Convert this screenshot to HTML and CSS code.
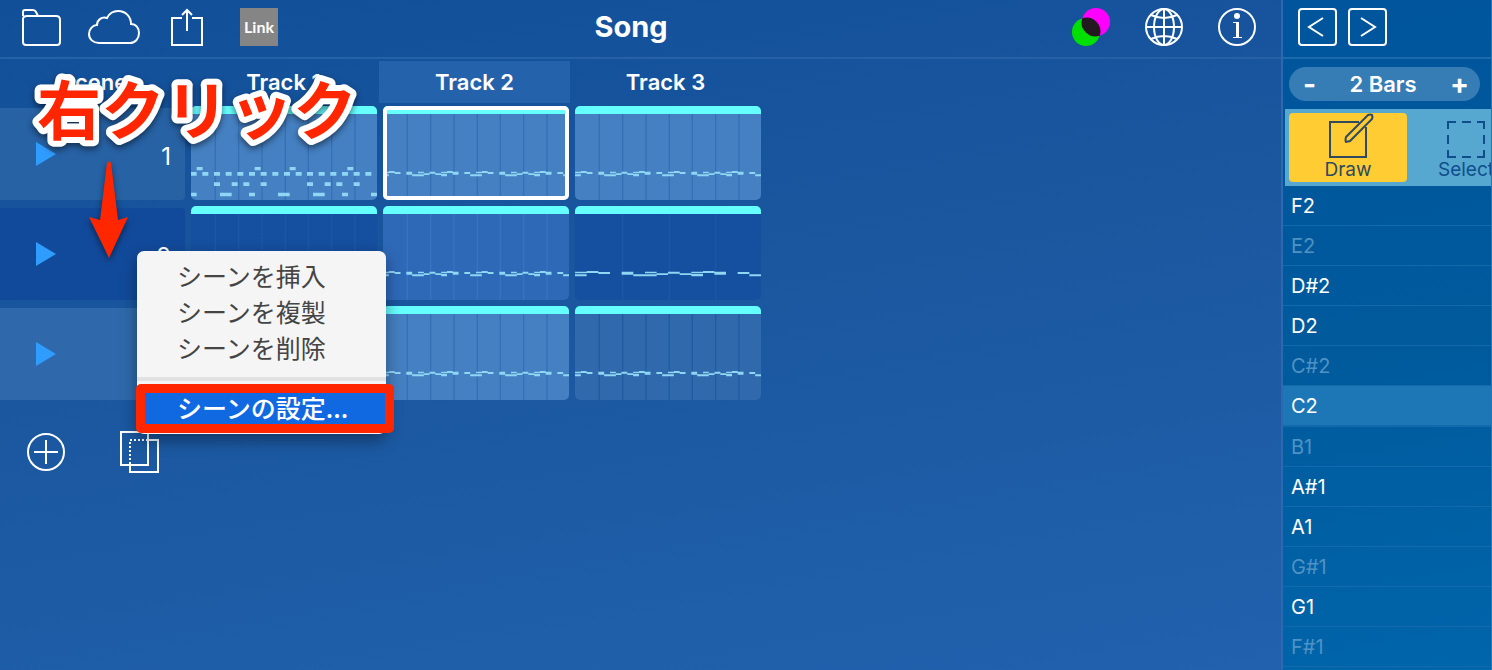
FILE: index.html
```html
<!DOCTYPE html>
<html lang="ja">

<head>
    <meta charset="UTF-8">
    <meta name="viewport" content="width=device-width, initial-scale=1.0">
    <title>Song</title>
    <link rel="stylesheet" href="styles.css">
</head>

<body>
    <!-- Shared note patterns -->
    <svg class="defs" aria-hidden="true">
        <defs>
            <g id="bars8">
                <path d="M73 0V258M143 0V258M213 0V258M283 0V258M352 0V258M422 0V258M492 0V258" />
            </g>
            <g id="bars4">
                <path d="M143 0V258M283 0V258M422 0V258" />
            </g>
            <g id="melody">
                <path d="M0 173h35v5H0zM0 181h35v6H0zM35 171h35v6H35zM70 174h35v6H70zM140 173h35v9H140zM175 181h35v6H175zM210 173h35v5H210zM210 181h35v6H210zM245 178h34v5H245zM279 173h35v6H279zM314 178h35v5H314zM349 173h35v5H349zM349 180h35v7H349zM384 171h34v6H384zM418 173h35v9H418zM488 174h35v6H488zM523 181h35v6H523z" />
            </g>
            <g id="melody2">
                <use href="#melody" transform="scale(.5 1)" />
                <use href="#melody" transform="translate(279) scale(.5 1)" />
            </g>
            <g id="drums">
                <path d="M17 159h18v10H17zM191 159h18v10H191zM296 159h18v10H296zM469 159h18v10H469z" />
                <path d="M0 174h17v11H0zM34 174h18v11H34zM69 174h18v11H69zM104 174h18v11H104zM139 174h18v11H139zM174 174h18v11H174zM209 174h18v11H209zM244 174h18v11H244zM279 174h18v11H279zM314 174h18v11H314zM348 174h18v11H348zM383 174h18v11H383zM418 174h18v11H418zM453 174h18v11H453zM488 174h18v11H488zM523 174h18v11H523z" />
                <path d="M69 205h18v11H69zM122 205h18v11H122zM157 205h18v11H157zM209 205h18v11H209zM348 205h18v11H348zM401 205h18v11H401zM436 205h18v11H436zM488 205h18v11H488z" />
                <path d="M0 236h17v11H0zM87 236h35v11H87zM174 236h18v11H174zM261 236h35v11H261zM366 236h35v11H366zM453 236h18v11H453zM540 236h18v11H540z" />
            </g>
        </defs>
    </svg>

    <div class="app">
        <main class="song">
            <header class="toolbar">
                <div class="tools">
                    <button type="button" class="icon-btn folder" aria-label="Files">
                        <svg width="40" height="38" viewBox="0 0 40 38">
                            <path d="M2 8V4q0-2 2-2h8q2 0 3 2l2 4h18q4 0 4 4v22q0 3-3 3H5q-3 0-3-3V11q0-3 4-3h11" />
                        </svg>
                    </button>
                    <button type="button" class="icon-btn cloud" aria-label="Cloud">
                        <svg width="52" height="38" viewBox="0 0 52 38">
                            <path d="M11 35C5 35 1 31 1 26c0-5 4-9 8-9 0-5 5-9 10-7 2-4 6-7 11-7 8 0 13 6 13 13 5 0 8 4 8 9 0 6-4 10-9 10z" />
                        </svg>
                    </button>
                    <button type="button" class="icon-btn share" aria-label="Share">
                        <svg width="32" height="38" viewBox="0 0 32 38">
                            <path d="M11 10H1v27h30V10H21M16 23V2M11 7l5-5 5 5" />
                        </svg>
                    </button>
                    <button type="button" class="link-btn">Link</button>
                </div>
                <h1>Song</h1>
                <div class="tools tools-right">
                    <button type="button" class="icon-btn" aria-label="Color">
                        <svg class="blend" width="38" height="38" viewBox="0 0 38 38">
                            <circle cx="14" cy="24" r="14" fill="#00e000" />
                            <circle cx="24" cy="14" r="14" fill="#ff00ff" />
                            <path d="M10.200 10.200A14 14 0 0 1 27.800 27.800A14 14 0 0 1 10.200 10.200z" fill="#231a20" />
                        </svg>
                    </button>
                    <button type="button" class="icon-btn" aria-label="Web">
                        <svg width="38" height="38" viewBox="0 0 38 38">
                            <circle cx="19" cy="19" r="18" />
                            <ellipse cx="19" cy="19" rx="10" ry="18" />
                            <path d="M19 1v36M1 19h36M6 7q13 6 26 0M6 31q13-6 26 0" />
                        </svg>
                    </button>
                    <button type="button" class="icon-btn" aria-label="Info">
                        <svg width="38" height="38" viewBox="0 0 38 38">
                            <circle cx="19" cy="19" r="18" />
                            <circle class="solid" cx="19" cy="8" r="3" />
                            <path class="solid" d="M15 14h6v15h3v1h-9v-1h3V15h-3z" />
                        </svg>
                    </button>
                </div>
            </header>

            <div class="track-heads">
                <div class="head">Scene</div>
                <div class="head">Track 1</div>
                <div class="head active">Track 2</div>
                <div class="head">Track 3</div>
            </div>

            <div class="grid">
                <div class="scene">
                    <button type="button" class="play" aria-label="Play scene 1"></button>
                    <span>1</span>
                </div>
                <button type="button" class="clip bright" aria-label="Track 1, scene 1">
                    <svg viewBox="0 0 558 258"><use class="lines" href="#bars8" /><use class="notes" href="#drums" /></svg>
                </button>
                <button type="button" class="clip bright selected" aria-label="Track 2, scene 1">
                    <svg viewBox="0 0 558 258"><use class="lines" href="#bars8" /><use class="notes" href="#melody2" /></svg>
                </button>
                <button type="button" class="clip bright" aria-label="Track 3, scene 1">
                    <svg viewBox="0 0 558 258"><use class="lines" href="#bars8" /><use class="notes" href="#melody2" /></svg>
                </button>

                <div class="scene current">
                    <button type="button" class="play" aria-label="Play scene 2"></button>
                    <span>2</span>
                </div>
                <button type="button" class="clip dark" aria-label="Track 1, scene 2">
                    <svg viewBox="0 0 558 258"><use class="lines" href="#bars8" /><use class="notes" href="#drums" /></svg>
                </button>
                <button type="button" class="clip middle" aria-label="Track 2, scene 2">
                    <svg viewBox="0 0 558 258"><use class="lines" href="#bars8" /><use class="notes" href="#melody2" /></svg>
                </button>
                <button type="button" class="clip dark" aria-label="Track 3, scene 2">
                    <svg viewBox="0 0 558 258"><use class="lines" href="#bars4" /><use class="notes" href="#melody" /></svg>
                </button>

                <div class="scene last">
                    <button type="button" class="play" aria-label="Play scene 3"></button>
                    <span>3</span>
                </div>
                <button type="button" class="clip muted" aria-label="Track 1, scene 3">
                    <svg viewBox="0 0 558 258"><use class="lines" href="#bars8" /><use class="notes" href="#drums" /></svg>
                </button>
                <button type="button" class="clip bright" aria-label="Track 2, scene 3">
                    <svg viewBox="0 0 558 258"><use class="lines" href="#bars8" /><use class="notes" href="#melody2" /></svg>
                </button>
                <button type="button" class="clip muted" aria-label="Track 3, scene 3">
                    <svg viewBox="0 0 558 258"><use class="lines" href="#bars8" /><use class="notes" href="#melody2" /></svg>
                </button>
            </div>

            <div class="scene-actions">
                <button type="button" class="icon-btn" aria-label="Add scene">
                    <svg width="38" height="40" viewBox="0 0 38 40">
                        <circle cx="19" cy="20" r="18" />
                        <path d="M19 8v24M7 20h24" />
                    </svg>
                </button>
                <button type="button" class="icon-btn" aria-label="Duplicate scene">
                    <svg width="39" height="42" viewBox="0 0 39 42">
                        <path d="M1 1h27v33H1zM28 9h10v32H10v-7" />
                        <path class="dots" d="M28 9H10v25" />
                    </svg>
                </button>
            </div>

            <!-- Scene context menu -->
            <div class="menu" role="menu">
                <button type="button" role="menuitem">シーンを挿入</button>
                <button type="button" role="menuitem">シーンを複製</button>
                <button type="button" role="menuitem">シーンを削除</button>
                <hr>
                <button type="button" role="menuitem" class="chosen">シーンの設定...</button>
            </div>

            <!-- Annotations -->
            <div class="marker"></div>
            <svg class="callout" width="340" height="84">
                <text x="8" y="62">右クリック</text>
            </svg>
            <svg class="arrow" width="42" height="98" viewBox="0 0 42 98" aria-hidden="true">
                <path d="M19 2q2-3 4 0l7 57 10-3-19 41L1 56l11 3z" />
            </svg>
        </main>

        <aside class="editor">
            <div class="nav">
                <button type="button" class="icon-btn" aria-label="Previous">
                    <svg width="39" height="38" viewBox="0 0 39 38">
                        <rect x="1" y="1" width="37" height="36" rx="3" />
                        <path d="M25 10L11 19l14 9" />
                    </svg>
                </button>
                <button type="button" class="icon-btn" aria-label="Next">
                    <svg width="39" height="38" viewBox="0 0 39 38">
                        <rect x="1" y="1" width="37" height="36" rx="3" />
                        <path d="M13 10l14 9-14 9" />
                    </svg>
                </button>
            </div>

            <div class="bars">
                <button type="button" class="step">-</button>
                <span>2 Bars</span>
                <button type="button" class="step">+</button>
            </div>

            <div class="modes">
                <button type="button" class="mode on">
                    <svg width="38" height="46" viewBox="0 0 38 46">
                        <path d="M37 14v30H1V9h29" />
                        <path d="M17 24L39 2q2-1 4 0 1 2 0 4L21 28l-4 1q-1-1 0-5z" />
                    </svg>
                    Draw
                </button>
                <button type="button" class="mode">
                    <svg width="38" height="46" viewBox="0 0 38 46">
                        <path d="M1 16V9h8M15 9h9M30 9h7v7M37 22v9M37 37v7h-7M24 44h-9M9 44H1v-7M1 31v-9" />
                    </svg>
                    Select
                </button>
            </div>

            <ul class="keys">
                <li>F2</li>
                <li class="off">E2</li>
                <li>D#2</li>
                <li>D2</li>
                <li class="off">C#2</li>
                <li class="root">C2</li>
                <li class="off">B1</li>
                <li>A#1</li>
                <li>A1</li>
                <li class="off">G#1</li>
                <li>G1</li>
                <li class="off">F#1</li>
            </ul>
        </aside>
    </div>
</body>

</html>
```
FILE: styles.css
```css
* {
    box-sizing: border-box;
}

body {
    margin: 0;
    font-family: Inter, "Noto Sans CJK JP", sans-serif;
    color: #fff;
    background: #18559f;
}

button {
    margin: 0;
    padding: 0;
    border: none;
    background: none;
    color: inherit;
    font: inherit;
    cursor: pointer;
}

svg {
    display: block;
}

.defs {
    position: absolute;
    width: 0;
    height: 0;
}

.app {
    display: flex;
    height: 100vh;
    overflow: hidden;
}

.song {
    position: relative;
    flex: 1;
    min-width: 0;
    background: linear-gradient(170deg, #114f99 0%, #1a579f 45%, #2161ad 100%);
}

/* Toolbar */
.toolbar {
    display: grid;
    grid-template-columns: 1fr auto 1fr;
    align-items: center;
    height: 59px;
    padding: 0 25px 4px 6px;
    border-bottom: 2px solid #2661a5;
}

.toolbar h1 {
    margin: 0;
    font-size: 29px;
    line-height: 38px;
    font-weight: 700;
}

.tools {
    display: flex;
    align-items: center;
    padding-left: 15px;
}

.tools-right {
    justify-content: flex-end;
    gap: 35px;
}

.cloud {
    margin-left: 27px;
}

.share {
    margin: 0 37px 0 31px;
}

.icon-btn svg {
    fill: none;
    stroke: #fff;
    stroke-width: 2;
}

.icon-btn .blend {
    stroke: none;
}

.icon-btn .solid {
    fill: #fff;
    stroke: none;
}

.icon-btn .dots {
    stroke-dasharray: 2 2;
}

.link-btn {
    width: 38px;
    height: 38px;
    background: #858585;
    font-family: Lato, sans-serif;
    font-size: 16px;
    font-weight: 700;
}

/* Tracks */
.track-heads {
    display: grid;
    grid-template-columns: 188px repeat(3, 191px);
    margin-top: 2px;
}

.head {
    height: 42px;
    font-size: 22px;
    line-height: 43px;
    font-weight: 600;
    text-align: center;
}

.head.active {
    background: #2562ac;
}

.grid {
    display: grid;
    grid-template-columns: 185px repeat(3, 186px);
    grid-auto-rows: 94px;
    gap: 6px;
    margin-top: 3px;
}

.scene {
    display: flex;
    align-items: center;
    justify-content: space-between;
    margin-top: 2px;
    padding: 4px 14px 0 36px;
    border-radius: 0 4px 4px 0;
    background: #2762a5;
    font-size: 24px;
}

.scene.current {
    background: #124a9b;
}

.scene.last {
    background: #2f69ab;
}

.play {
    width: 20px;
    height: 24px;
    margin-bottom: 4px;
    background: #2f9dff;
    clip-path: polygon(0 0, 100% 50%, 0 100%);
}

.clip {
    overflow: hidden;
    border-top: 8px solid #66ffff;
    border-radius: 5px;
}

.clip svg {
    width: 100%;
    height: 86px;
}

.clip .lines {
    fill: none;
    stroke-width: 4;
}

.clip .notes {
    fill: #8fd6f3;
}

.bright {
    background: #4580c2;
}

.bright .lines {
    stroke: #3470b5;
}

.middle {
    background: #2e69b8;
}

.middle .lines {
    stroke: #3873c0;
}

.dark {
    background: #154f9f;
}

.dark .lines {
    stroke: #1d57a4;
}

.muted {
    background: #306aac;
}

.muted .lines {
    stroke: #205ca2;
}

.selected {
    outline: 4px solid #fff;
    outline-offset: -4px;
}

.scene-actions {
    display: flex;
    align-items: center;
    gap: 55px;
    padding: 31px 27px 0;
}

/* Context menu */
.menu {
    position: absolute;
    top: 251px;
    left: 137px;
    width: 249px;
    padding: 6px 0 9px;
    border-radius: 7px;
    background: #f5f5f5;
    box-shadow: 0 6px 16px rgba(0, 0, 0, 0.4);
}

.menu button {
    display: block;
    width: 100%;
    height: 36px;
    padding-left: 40px;
    font-family: "Noto Sans CJK JP", sans-serif;
    font-size: 25px;
    line-height: 36px;
    text-align: left;
    color: #444;
}

.menu hr {
    height: 4px;
    margin: 12px 0 8px;
    border: none;
    background: #e2e2e2;
}

.menu .chosen {
    font-weight: 500;
    color: #fff;
    background: #1169e2;
}

/* Annotations */
.marker {
    position: absolute;
    top: 384px;
    left: 136px;
    width: 258px;
    height: 49px;
    border: 9px solid #ff2600;
    border-radius: 5px;
}

.callout {
    position: absolute;
    top: 72px;
    left: 29px;
    overflow: visible;
    font-family: "Noto Sans CJK JP", sans-serif;
    font-size: 64px;
    font-weight: 700;
    fill: #ff2600;
    stroke: #fff;
    stroke-width: 12px;
    stroke-linejoin: round;
    paint-order: stroke;
    filter: drop-shadow(0 3px 3px rgba(0, 0, 0, 0.5));
}

.arrow {
    position: absolute;
    top: 161px;
    left: 88px;
    fill: #ff2600;
    filter: drop-shadow(0 3px 3px rgba(0, 0, 0, 0.5));
}

/* Editor */
.editor {
    flex: 0 0 211px;
    overflow: hidden;
    border-left: 2px solid #2a6bb0;
    border-right: 1px solid #2a76b4;
    background: linear-gradient(170deg, #00559c 0%, #005a9c 50%, #0065ab 100%);
}

.nav {
    display: flex;
    align-items: flex-start;
    gap: 11px;
    height: 59px;
    padding: 8px 15px 0;
    border-bottom: 2px solid #1a6aac;
}

.bars {
    display: flex;
    align-items: center;
    justify-content: space-between;
    height: 34px;
    margin: 8px 11px 8px 6px;
    padding: 0 11px 0 14px;
    border-radius: 17px;
    background: #367db5;
    font-size: 22px;
    font-weight: 600;
}

.step {
    font-size: 28px;
    line-height: 34px;
    font-weight: 700;
}

.modes {
    display: flex;
    height: 77px;
    margin-left: 2px;
    padding: 4px;
    overflow: hidden;
    background: #56a8d0;
}

.mode {
    display: flex;
    flex: 0 0 118px;
    flex-direction: column;
    align-items: center;
    border-radius: 4px;
    font-size: 19px;
    line-height: 22px;
    color: #104e8b;
}

.mode.on {
    background: #ffcc33;
    color: #30495e;
}

.mode svg {
    overflow: visible;
    fill: none;
    stroke: currentColor;
    stroke-width: 2;
}

.keys {
    margin: 0;
    padding: 0;
    list-style: none;
    font-size: 20px;
    line-height: 41px;
}

.keys li {
    height: 40px;
    padding-left: 8px;
    border-bottom: 1px solid #126aac;
}

.keys .off {
    color: #4f92c4;
}

/* C starts the octave, so its line is thicker */
.keys .root {
    height: 41px;
    border-bottom-width: 2px;
    background: #1d77b7;
}
```
